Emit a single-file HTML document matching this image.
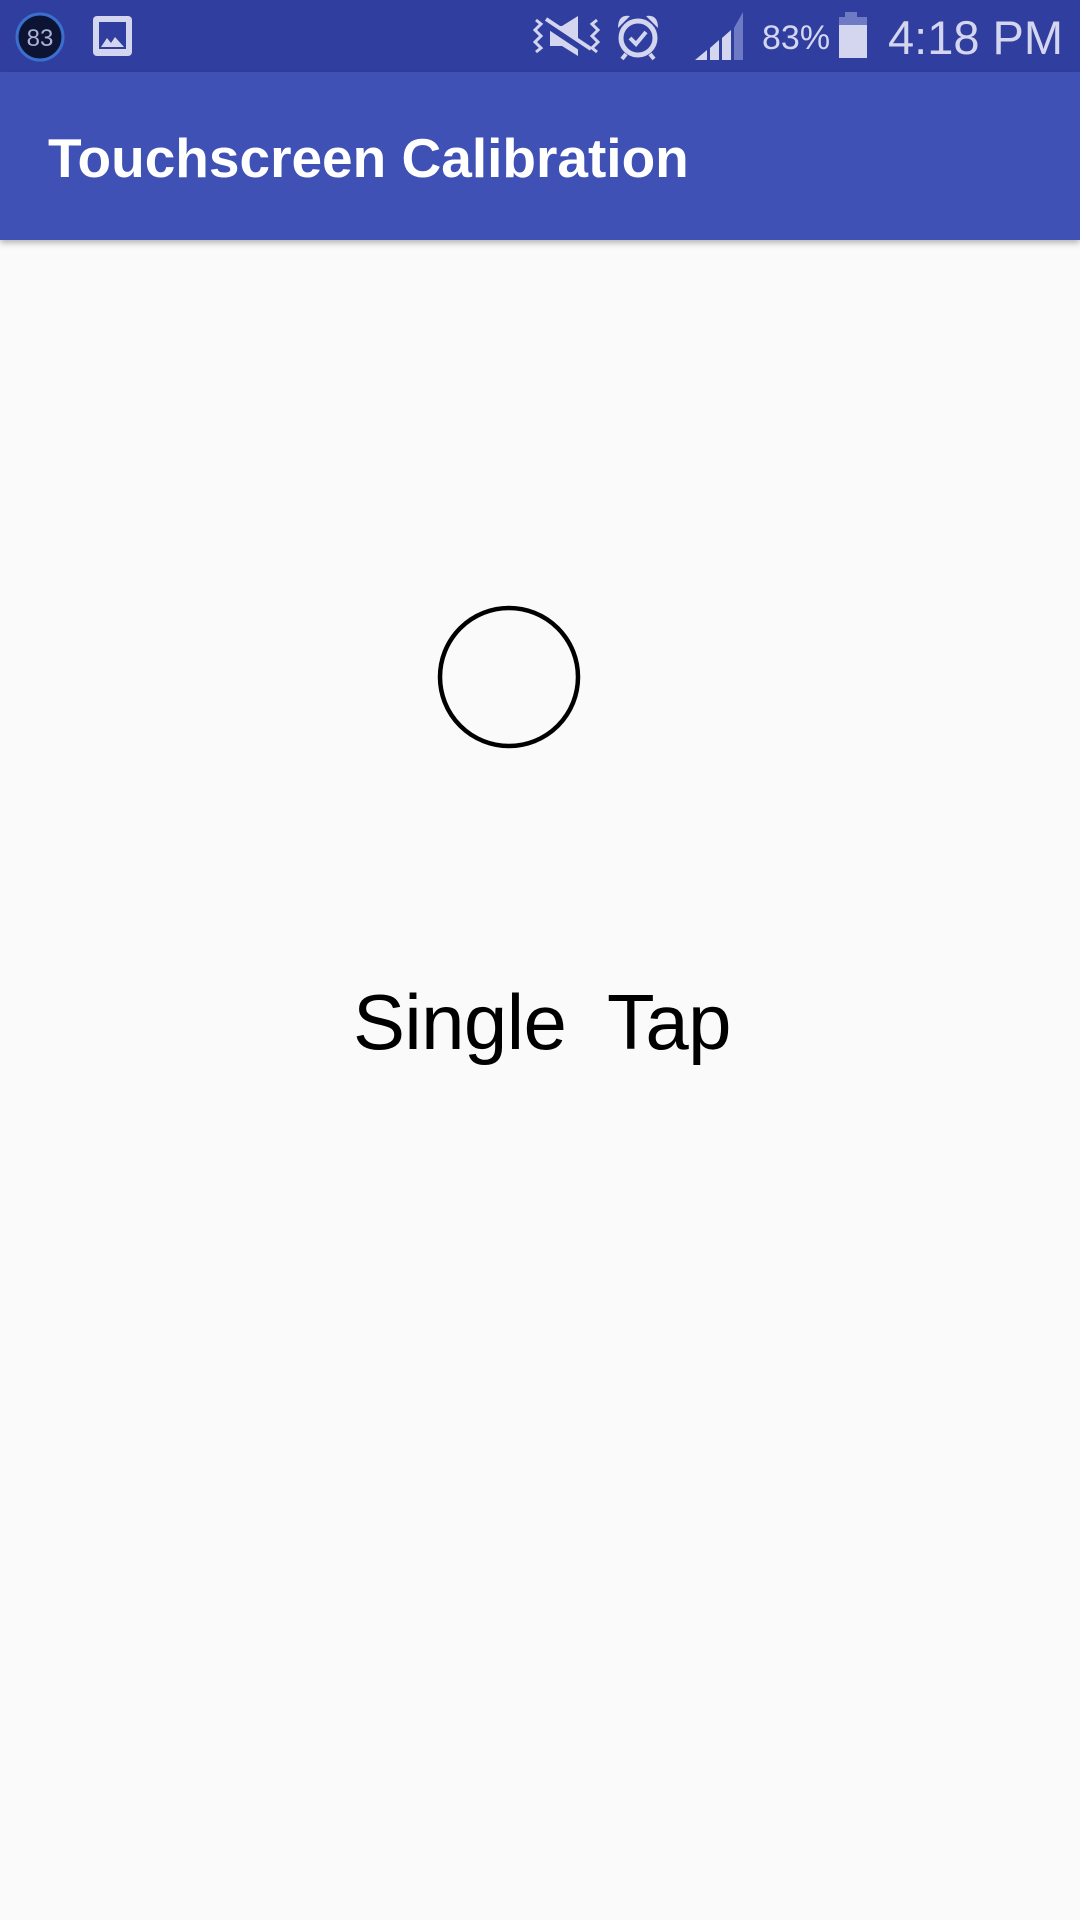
<!DOCTYPE html>
<html><head><meta charset="utf-8"><style>
html,body{margin:0;padding:0;width:1080px;height:1920px;overflow:hidden;background:#FAFAFA;font-family:"Liberation Sans",sans-serif;}
#sb{position:absolute;left:0;top:0;width:1080px;height:72px;background:#303F9F;}
#ab{position:absolute;left:0;top:72px;width:1080px;height:168px;background:#3F51B5;box-shadow:0 3px 6px rgba(0,0,0,.28);}
#title{position:absolute;left:48px;top:131px;font-size:55px;font-weight:bold;color:#fff;line-height:1;}
.st{position:absolute;color:#D3D6EE;line-height:1;}
#txt{position:absolute;left:353px;top:983px;font-size:78px;letter-spacing:-0.6px;color:#000;line-height:1;white-space:pre;-webkit-text-stroke:0;}
</style></head><body>
<div id="sb"></div>
<div id="ab"></div>
<div id="title">Touchscreen Calibration</div>
<svg style="position:absolute;left:0;top:0" width="1080" height="72">
 <circle cx="40" cy="37" r="23" fill="#0d1433" stroke="#3a6fd0" stroke-width="3"/>
 <text x="40" y="46" font-size="24" fill="#a9b2d6" text-anchor="middle" font-family="Liberation Sans">83</text>
 <rect x="93" y="16" width="39" height="40" rx="4" fill="#D3D6EE"/>
 <rect x="99" y="22" width="27" height="27" fill="#303F9F"/>
 <path d="M101 47 L107 38 L111 43 L115 37 L124 47 Z" fill="#D3D6EE"/>
 <g fill="#D3D6EE" stroke="#D3D6EE">
  <path d="M550 26 L562 26 L578 16 L578 56 L562 46 L550 46 Z" stroke="none"/>
  <path d="M545 22 L590 52" stroke="#303F9F" stroke-width="9"/>
  <path d="M546 19 L591 49" stroke-width="4"/>
  <path d="M536 20 L541 24 L535 30 L541 36 L535 42 L541 48 L536 52" fill="none" stroke-width="3"/>
  <path d="M597 20 L592 24 L598 30 L592 36 L598 42 L592 48 L597 52" fill="none" stroke-width="3"/>
  <circle cx="638" cy="38" r="17" fill="none" stroke-width="5"/>
  <path d="M630 38 L636 44 L646 32" fill="none" stroke-width="4"/>
  <path d="M618 28 Q618 14 630 16 Z M658 28 Q658 14 646 16 Z" stroke="none"/>
  <path d="M626 54 L622 59 M650 54 L654 59" stroke-width="4"/>
 </g>
 <path d="M695 60 L707 50 L707 60 Z M710 48 L719 40 L719 60 L710 60 Z M722 38 L731 30 L731 60 L722 60 Z" fill="#D3D6EE"/>
 <path d="M734 28 L743 12 L743 60 L734 60 Z" fill="#6E7BC4"/>
 <rect x="845" y="12" width="12" height="6" fill="#6E7BC4"/>
 <rect x="839" y="17" width="28" height="10" fill="#6E7BC4"/>
 <rect x="839" y="25" width="28" height="33" fill="#D3D6EE"/>
</svg>
<div class="st" style="left:762px;top:21px;font-size:34px;">83%</div>
<div class="st" style="left:888px;top:14px;font-size:47px;">4:18 PM</div>
<svg style="position:absolute;left:0;top:0" width="1080" height="1920" pointer-events="none">
 <circle cx="509" cy="677" r="69" fill="none" stroke="#000" stroke-width="4.5"/>
</svg>
<div id="txt">Single  Tap</div>
</body></html>
